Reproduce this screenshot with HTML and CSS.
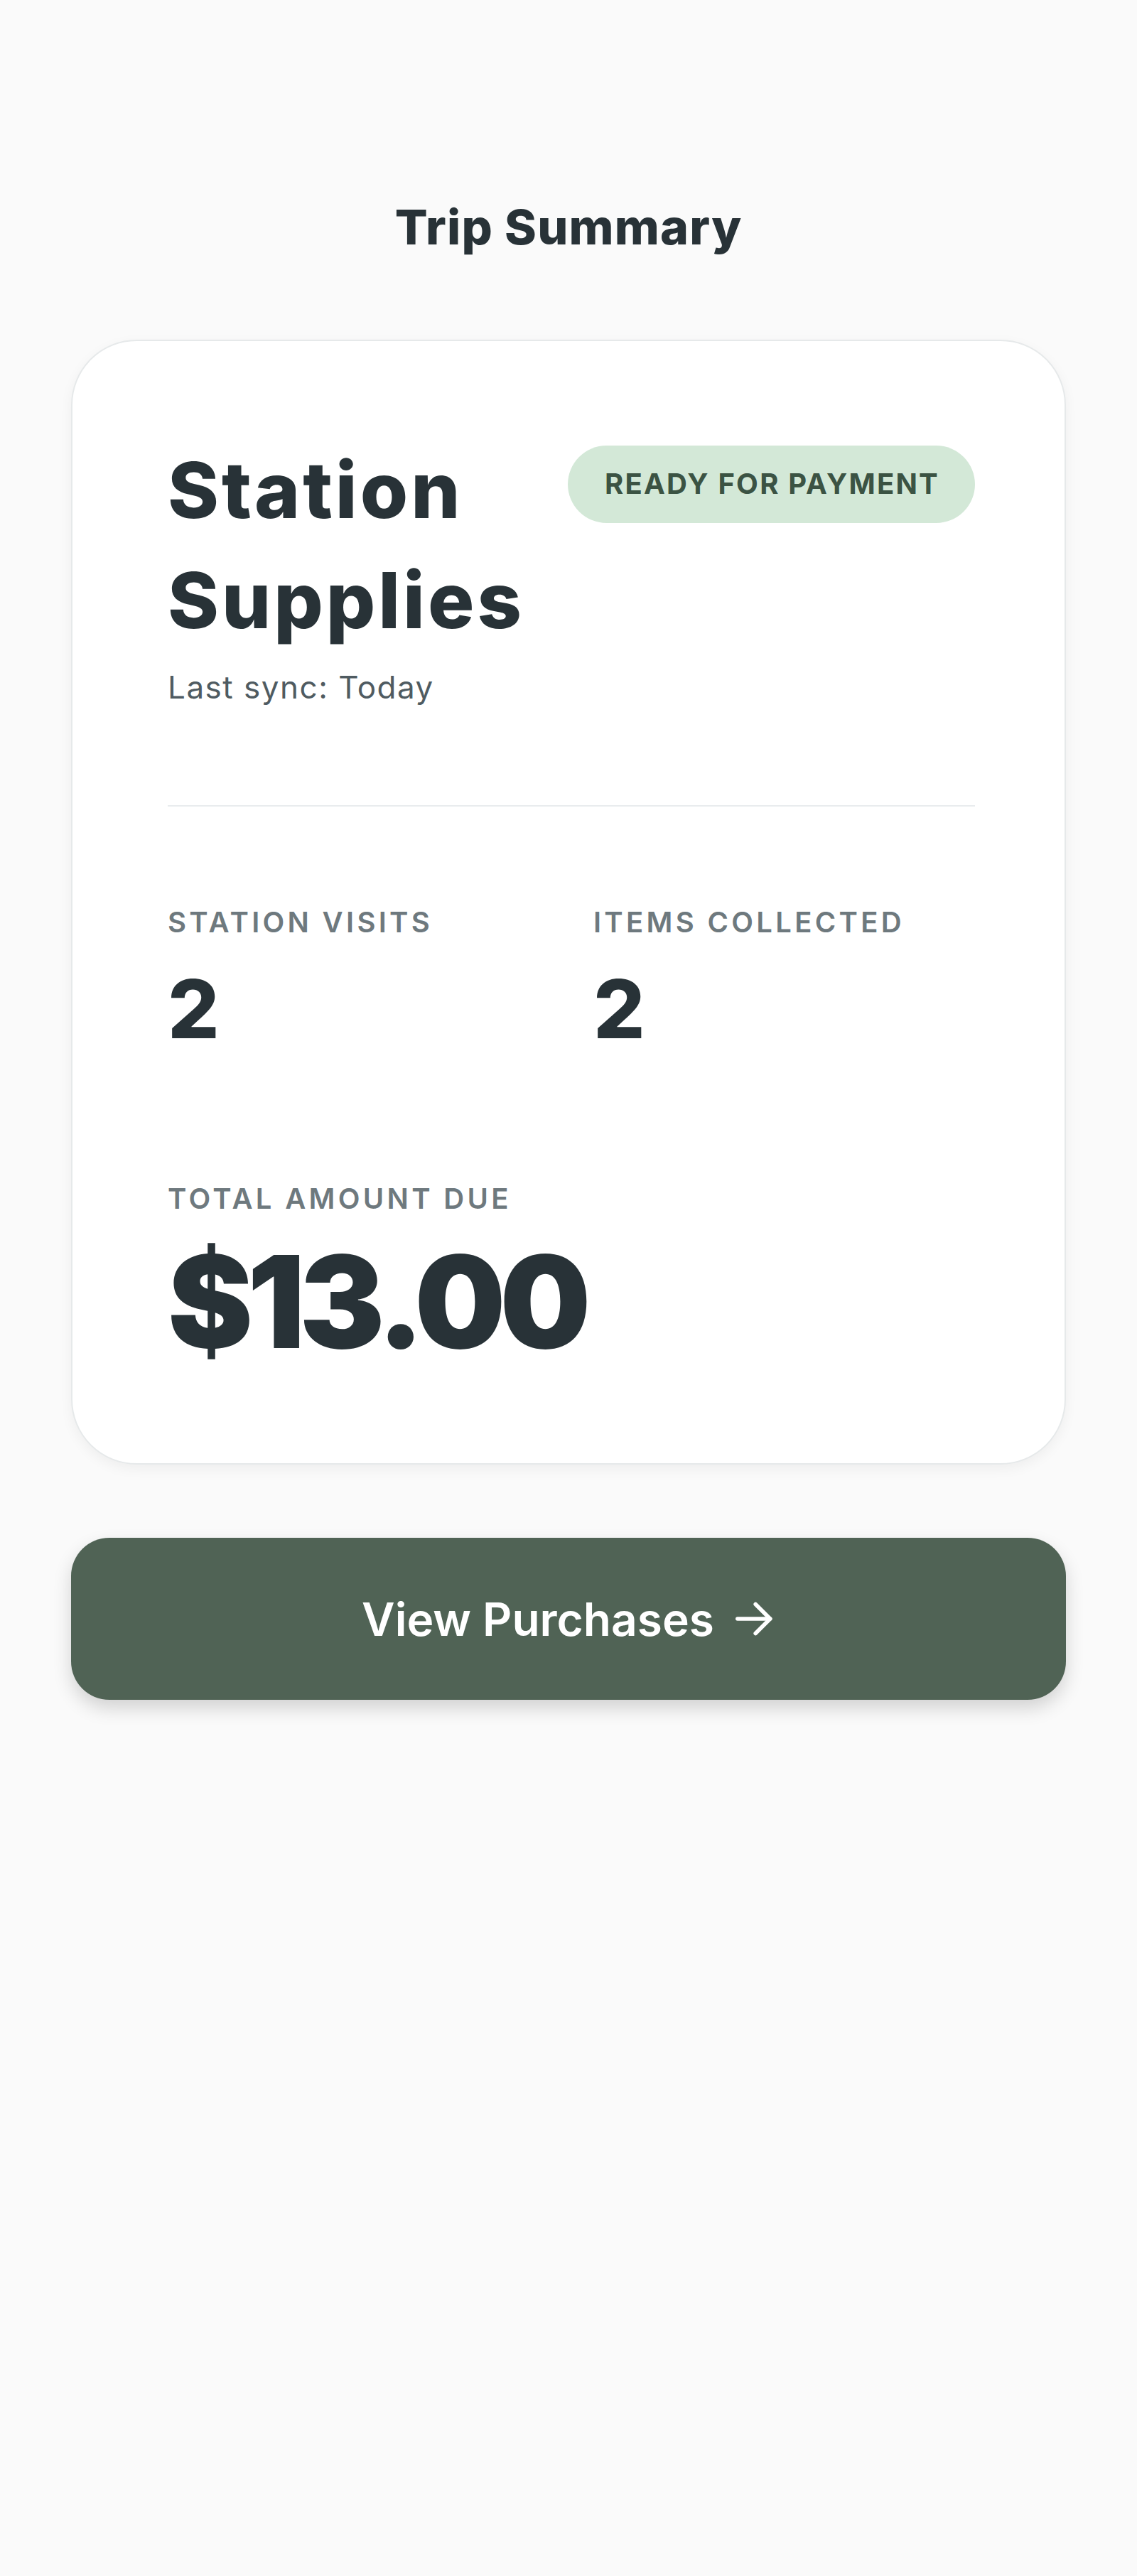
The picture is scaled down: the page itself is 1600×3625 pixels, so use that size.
FILE: index.html
```html
<!DOCTYPE html>
<html lang="en">
  <head>
    <meta charset="UTF-8" />
    <meta name="viewport" content="width=device-width, initial-scale=1.0" />
    <title>Trip Summary</title>
    <link rel="stylesheet" href="styles.css">
  </head>
  <body>
    <main class="page">
      <h1 class="page-title">Trip Summary</h1>

      <section class="card">
        <div class="card-header">
          <div class="card-heading">
            <h2 class="card-title">Station Supplies</h2>
            <p class="sync">Last sync: Today</p>
          </div>
          <span class="badge">READY FOR PAYMENT</span>
        </div>

        <hr class="divider" />

        <div class="stats">
          <div class="stat">
            <div class="label">STATION VISITS</div>
            <div class="stat-value">2</div>
          </div>
          <div class="stat">
            <div class="label">ITEMS COLLECTED</div>
            <div class="stat-value">2</div>
          </div>
        </div>

        <div class="total">
          <div class="label">TOTAL AMOUNT DUE</div>
          <div class="amount">$13.00</div>
        </div>
      </section>

      <button class="primary-btn" type="button">
        <span>View Purchases</span>
        <svg class="arrow" viewBox="0 0 24 24" width="58" height="58" fill="none" stroke="currentColor" stroke-width="2.3" stroke-linecap="round" stroke-linejoin="round">
          <path d="M2 12h19" />
          <path d="M12.5 3.5l8.5 8.5-8.5 8.5" />
        </svg>
      </button>
    </main>
  </body>
</html>
```

FILE: styles.css
```css
body {
  margin: 0;
  font-family: Inter, "Noto Sans", Arial, sans-serif;
  background-color: #fafafa;
  color: #283237;
}

.page {
  width: 1400px;
  margin: 0 auto;
  padding-top: 279px;
  padding-bottom: 200px;
}

.page-title {
  margin: 0 0 119px;
  text-align: center;
  font-size: 68px;
  line-height: 80px;
  font-weight: 800;
  letter-spacing: 1.2px;
}

.card {
  background-color: #fff;
  border: 2px solid #e6e9ea;
  border-radius: 92px;
  padding: 132px 126px 137px 134px;
  box-shadow: 0 6px 18px rgba(0, 0, 0, 0.05);
}

.card-header {
  display: flex;
  justify-content: space-between;
  align-items: flex-start;
  gap: 40px;
}

.card-heading {
  flex: 1;
  min-width: 0;
}

.card-title {
  margin: 0;
  font-size: 109px;
  line-height: 155px;
  font-weight: 800;
  letter-spacing: 4px;
}

.sync {
  margin: 19px 0 0;
  font-size: 44px;
  line-height: 52px;
  color: #4f5b61;
  letter-spacing: 1.5px;
}

.badge {
  flex-shrink: 0;
  margin-top: 15px;
  padding: 30px 50px 31px 52px;
  border-radius: 60px;
  background-color: #d3e8d7;
  color: #3b5343;
  font-size: 40px;
  line-height: 48px;
  font-weight: 700;
  letter-spacing: 2.2px;
}

.divider {
  margin: 140px 0 0;
  border: none;
  border-top: 2px solid #e9ecee;
}

.stats {
  display: grid;
  grid-template-columns: 1fr 1fr;
  gap: 62px;
  margin-top: 139px;
}

.label {
  font-size: 40px;
  line-height: 48px;
  font-weight: 600;
  letter-spacing: 4.3px;
  color: #6e797e;
}

.stat-value {
  margin-top: 41px;
  font-size: 114px;
  line-height: 114px;
  font-weight: 800;
}

.total {
  margin-top: 186px;
}

.amount {
  margin-top: 31px;
  font-size: 180px;
  line-height: 180px;
  font-weight: 900;
  letter-spacing: -8px;
}

.primary-btn {
  display: flex;
  align-items: center;
  justify-content: center;
  gap: 28px;
  width: 100%;
  height: 228px;
  margin-top: 103px;
  border: none;
  border-radius: 54px;
  background-color: #506355;
  color: #fff;
  font-family: inherit;
  font-size: 64px;
  font-weight: 600;
  box-shadow: 0 12px 26px rgba(0, 0, 0, 0.16);
  cursor: pointer;
}

.arrow {
  display: block;
}
```
